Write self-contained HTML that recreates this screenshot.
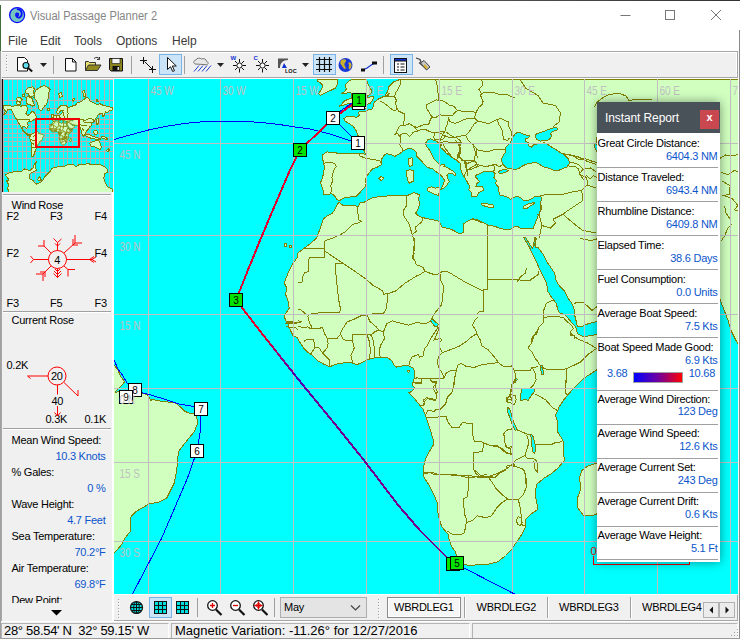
<!DOCTYPE html>
<html><head><meta charset="utf-8"><title>Visual Passage Planner 2</title>
<style>
html,body{margin:0;padding:0}
body{width:740px;height:639px;overflow:hidden;position:relative;background:#f0f0f0;font-family:"Liberation Sans",sans-serif;font-size:11px;color:#000}
.abs{position:absolute}
#title{left:0;top:0;width:740px;height:30px;background:#fff}
#title .t{left:30px;top:9px;font-size:12.5px;color:#858585;line-height:14px;transform:scaleX(.889);transform-origin:0 0;white-space:nowrap}
#menu{left:0;top:30px;width:740px;height:21px;background:#fff}
#menu span{position:absolute;top:3.5px;font-size:12px;color:#3a3a3a;line-height:14px}
#tb{left:0;top:51px;width:738px;height:27px;background:#f0f0f0;border:1px solid #a6a6a6;border-left:none;box-sizing:border-box;box-shadow:inset 0 1px 0 #fff,inset -1px 0 0 #fff}
#left{left:0;top:79px;width:114px;height:542px;background:#f0f0f0}
.lbl{position:absolute;white-space:nowrap;letter-spacing:-.25px;line-height:13px}
.val{position:absolute;white-space:nowrap;color:#0b56cc;text-align:right;letter-spacing:-.25px;line-height:13px}
#rep{left:597px;top:102px;width:123px;height:459.5px;background:#fff;box-shadow:0 0 10px 0 rgba(0,0,0,.42)}
#rep .h{left:0;top:0;width:123px;height:31px;background:#4a5259;color:#fff}
#rep .row{position:absolute;left:0;width:123px;border-top:1px solid #b0b0b0}
#rep .l{position:absolute;left:0.5px;font-size:11px;letter-spacing:-.25px;white-space:nowrap}
#rep .v{position:absolute;right:2.5px;font-size:11px;letter-spacing:-.25px;color:#0b56cc;white-space:nowrap}
#btb{left:114px;top:594px;width:624px;height:27px;background:#f0f0f0;box-sizing:border-box;border-right:1px solid #a6a6a6;border-bottom:1px solid #a6a6a6}
#status{left:0;top:621px;width:740px;height:18px;background:#f0f0f0}
</style></head><body>
<div id="title" class="abs"><div class="abs t">Visual Passage Planner 2</div>
<svg class="abs" style="left:8px;top:6px" width="18" height="18" viewBox="0 0 18 18"><circle cx="9.1" cy="9.1" r="7.5" fill="#74c6be" stroke="#0a0aff" stroke-width="1.3"/><path d="M9.6 9.6a1.2 1.2 0 1 0-1.6-1.5a2.8 2.8 0 0 0 3.8 3.3a4.5 4.5 0 0 0-2.2-8.2" fill="none" stroke="#0a0aff" stroke-width="1.7" stroke-linecap="round"/></svg>
<svg class="abs" style="left:600px;top:0" width="140" height="30" viewBox="0 0 140 30" fill="none" stroke="#777" stroke-width="1"><path d="M20.5 15.5h10"/><rect x="65.5" y="10.5" width="9" height="9"/><path d="M111 10l10 10M121 10l-10 10"/></svg>
</div>
<div class="abs" style="left:0;top:0;width:740px;height:1px;background:linear-gradient(90deg,#b4b4b4,#555 60%,#333)"></div><div class="abs" style="left:0;top:5px;width:1px;height:46px;background:#3f6d3a;z-index:3"></div><div class="abs" style="left:0;top:51px;width:1px;height:588px;background:#a0a0a0;z-index:6"></div><div class="abs" style="left:1px;top:51px;width:1px;height:28px;background:#f4f4f4;z-index:6"></div><div class="abs" style="left:1px;top:79px;width:1px;height:542px;background:#a8a8a8;z-index:6"></div>
<div id="menu" class="abs"><span style="left:8px">File</span><span style="left:40px">Edit</span><span style="left:74px">Tools</span><span style="left:116px">Options</span><span style="left:172px">Help</span></div>
<div id="tb" class="abs"><svg class="abs" style="left:0;top:-1px" width="740" height="27" viewBox="0 51 740 27" shape-rendering="crispEdges">
<rect x="6" y="55" width="1" height="1" fill="#a0a0a0"/><rect x="7" y="56" width="1" height="1" fill="#fff"/>
<rect x="6" y="58" width="1" height="1" fill="#a0a0a0"/><rect x="7" y="59" width="1" height="1" fill="#fff"/>
<rect x="6" y="61" width="1" height="1" fill="#a0a0a0"/><rect x="7" y="62" width="1" height="1" fill="#fff"/>
<rect x="6" y="64" width="1" height="1" fill="#a0a0a0"/><rect x="7" y="65" width="1" height="1" fill="#fff"/>
<rect x="6" y="67" width="1" height="1" fill="#a0a0a0"/><rect x="7" y="68" width="1" height="1" fill="#fff"/>
<rect x="6" y="70" width="1" height="1" fill="#a0a0a0"/><rect x="7" y="71" width="1" height="1" fill="#fff"/>
<rect x="53" y="56" width="1" height="18" fill="#a0a0a0"/>
<rect x="131" y="56" width="1" height="18" fill="#a0a0a0"/>
<rect x="184" y="56" width="1" height="18" fill="#a0a0a0"/>
<rect x="383" y="56" width="1" height="18" fill="#a0a0a0"/>
<rect x="159.5" y="54.5" width="22" height="20" fill="#cce4f7" stroke="#7ab4e6"/>
<rect x="313.5" y="54.5" width="22" height="20" fill="#cce4f7" stroke="#7ab4e6"/>
<rect x="390.5" y="54.5" width="22" height="20" fill="#cce4f7" stroke="#7ab4e6"/>
<path d="M40 63h7l-3.5 4z" fill="#222" shape-rendering="auto"/>
<path d="M217 63h7l-3.5 4z" fill="#222" shape-rendering="auto"/>
<path d="M302 63h7l-3.5 4z" fill="#222" shape-rendering="auto"/>
<g shape-rendering="auto">
<path d="M17.5 57.5h7l3 3v10.5h-10z" fill="#fff" stroke="#111"/><circle cx="26" cy="65.5" r="3" fill="#5fe0f0" stroke="#111" stroke-width="1.2"/><path d="M28.2 68l4 3.6" stroke="#111" stroke-width="2"/>
<path d="M65.5 58.5h7l3.5 3.5v9h-10.5z" fill="#fff" stroke="#111"/><path d="M72.5 58.5v3.5h3.5" fill="none" stroke="#111"/>
<path d="M85.5 70.5v-9h3l1 1h6v2.5" fill="#e8e070" stroke="#333"/><path d="M85.5 70.5l3-5.5h12.5l-3.5 5.5z" fill="#908a20" stroke="#333"/><path d="M94 58.5c2-1.5 4-1.5 5.5 0.5m0-2v2.5h-2.5" fill="none" stroke="#333"/>
<path d="M109.5 58.5h13v12.5h-11.5l-1.5-1.5z" fill="#8a8420" stroke="#111"/><rect x="112" y="58.5" width="8" height="5" fill="#f4f4f4" stroke="#111" stroke-width=".6"/><rect x="112.5" y="66" width="7" height="5" fill="#111"/><rect x="117.5" y="67" width="1.5" height="3" fill="#ddd"/>
<path d="M140 60.5h7M143.5 57v7M144.5 61.5l8 8M149 69.5h7M152.5 66v7" stroke="#111" stroke-width="1" fill="none"/>
<path d="M167.5 57.5v12l3-2.8 2.2 4.8 1.8-.8-2.2-4.700h4z" fill="#fff" stroke="#111"/>
<path d="M195 64c-2-1-1.5-4 1-4 .5-2 4-2.5 5.5-1 2-1 5 0 5 2.5 2 0 2.5 3 0 3.2z" fill="#e8e8e8" stroke="#777"/><path d="M199 65.5l-5 6M203 65.5l-5 6M207 65.5l-5 6M211 65.5l-5 6" stroke="#2244cc" stroke-width="1"/>
<circle cx="239.5" cy="65.5" r="2.6" fill="#fff" stroke="#111"/><path d="M239.5 59v3.5M239.5 69v3.5M233.0 65.5h3.5M242.5 65.5h3.5M235.0 61l2.3 2.3M244.0 61l-2.3 2.3M235.0 70l2.3-2.3M244.0 70l-2.3-2.3" stroke="#111" stroke-width="1"/><text x="230.5" y="60" font-size="6" font-weight="bold" fill="#1030d0" font-family="Liberation Sans, sans-serif">W</text>
<circle cx="262.5" cy="65.5" r="2.6" fill="#fff" stroke="#111"/><path d="M262.5 59v3.5M262.5 69v3.5M256.0 65.5h3.5M265.5 65.5h3.5M258.0 61l2.3 2.3M267.0 61l-2.3 2.3M258.0 70l2.3-2.3M267.0 70l-2.3-2.3" stroke="#111" stroke-width="1"/><text x="253.5" y="60" font-size="6" font-weight="bold" fill="#1030d0" font-family="Liberation Sans, sans-serif">C</text>
<path d="M278 58.5h10v1.5c-5 0-8 3-8 8h-2z" fill="#555"/><path d="M284 63l3 5h-5z" fill="#1030d0"/><text x="285" y="72.5" font-size="5.5" font-weight="bold" fill="#111" font-family="Liberation Sans, sans-serif">LOC</text>
<path d="M316 59.5h16M316 64.5h16M316 69.5h16M319.5 57v15M324.5 57v15M329.5 57v15" stroke="#111" stroke-width="1.2" fill="none"/>
<circle cx="345.5" cy="65" r="7" fill="#1838d8"/><path d="M341.5 60c1.5-1 3.5-1 4.5 0 .5 1.5-1 2.5-1.5 3.5s.5 3 1.5 4.5c-.5 1.5-2 1-3-.5s-1.5-2.5-2.5-3.5c-.5-1.5 0-3 1-4zM348.5 62.5c1.5-.5 3 .5 3 2.5s-.5 3.5-2 4.5c-1-1-1-2.5-.5-3.5s-1-2-.5-3.5z" fill="#c8b030"/>
<path d="M362 70.5l5-2.5 5-3.5 5-2" stroke="#1030d0" stroke-width="1.2" fill="none"/><rect x="361" y="68.5" width="4" height="3" fill="#111"/><rect x="372" y="61.5" width="5" height="3" fill="#111"/>
<rect x="394.5" y="58.5" width="12" height="14" fill="#fff" stroke="#111"/><rect x="394.5" y="58.5" width="12" height="2.5" fill="#1030d0" stroke="#111"/><path d="M397 64h2M400.5 64h4M397 67h2M400.5 67h4M397 70h2M400.5 70h4" stroke="#111" stroke-width="1.2"/>
<path d="M416 58l4 1.5 1.5 4M419 62.5l8 7" stroke="#444" stroke-width="1.3" fill="none"/><path d="M420.5 63l3.5-2.5 6 6.5-3.5 3z" fill="#c8c8c8" stroke="#444"/><path d="M424 65l3 3.2" stroke="#d8b020" stroke-width="2"/>
</g></svg></div>
<div class="abs" style="left:0;top:78px;width:739px;height:1px;background:#fff"></div><div class="abs" style="left:739px;top:30px;width:1px;height:609px;background:#8a8a8a;z-index:5"></div><div class="abs" style="left:738px;top:51px;width:1px;height:588px;background:#fafafa;z-index:5"></div><div class="abs" style="left:0;top:638px;width:740px;height:1px;background:#9a9a9a;z-index:5"></div>
<div id="left" class="abs"><div class="abs" style="left:112px;top:113px;width:2px;height:429px;background:#fff"></div>
<div class="abs" style="left:3px;top:115px;width:108px;height:1px;background:#a0a0a0"></div><div class="abs" style="left:3px;top:116px;width:108px;height:1px;background:#fff"></div>
<div class="abs" style="left:3px;top:232px;width:108px;height:1px;background:#a0a0a0"></div><div class="abs" style="left:3px;top:233px;width:108px;height:1px;background:#fff"></div>
<div class="abs" style="left:3px;top:349px;width:108px;height:1px;background:#a0a0a0"></div><div class="abs" style="left:3px;top:350px;width:108px;height:1px;background:#fff"></div>
<div class="lbl" style="left:11.5px;top:120px;">Wind Rose</div>
<div class="lbl" style="left:6.5px;top:131px;">F2</div>
<div class="lbl" style="left:50px;top:131px;">F3</div>
<div class="lbl" style="left:94.5px;top:131px;">F4</div>
<div class="lbl" style="left:6.5px;top:168px;">F2</div>
<div class="lbl" style="left:94.5px;top:168px;">F4</div>
<div class="lbl" style="left:6.5px;top:217.5px;">F3</div>
<div class="lbl" style="left:50px;top:217.5px;">F5</div>
<div class="lbl" style="left:94.5px;top:217.5px;">F3</div>
<div class="lbl" style="left:11.5px;top:235px;">Current Rose</div>
<div class="lbl" style="left:6.5px;top:280px;">0.2K</div>
<div class="lbl" style="left:51.5px;top:315.5px;">40</div>
<div class="lbl" style="left:45.5px;top:334px;">0.3K</div>
<div class="lbl" style="left:84.5px;top:334px;">0.1K</div>
<div class="lbl" style="left:11.5px;top:355px;">Mean Wind Speed:</div>
<div class="val" style="right:8.5px;top:371px">10.3 Knots</div>
<div class="lbl" style="left:11.5px;top:386.5px;">% Gales:</div>
<div class="val" style="right:8.5px;top:402.5px">0 %</div>
<div class="lbl" style="left:11.5px;top:418.5px;">Wave Height:</div>
<div class="val" style="right:8.5px;top:434.5px">4.7 Feet</div>
<div class="lbl" style="left:11.5px;top:450.5px;">Sea Temperature:</div>
<div class="val" style="right:8.5px;top:466.5px">70.2°F</div>
<div class="lbl" style="left:11.5px;top:482.5px;">Air Temperature:</div>
<div class="val" style="right:8.5px;top:498.5px">69.8°F</div>
<div class="abs" style="left:0;top:513px;width:112px;height:10.5px;overflow:hidden"><div class="lbl" style="left:11.5px;top:1.5px">Dew Point:</div></div>
<svg class="abs" style="left:0;top:0" width="114" height="542" viewBox="0 79 114 542" fill="none" stroke="#ff0000" stroke-width="1" shape-rendering="crispEdges">
<circle cx="57.5" cy="259.5" r="9" shape-rendering="auto"/>
<g shape-rendering="auto">
<path d="M66.5 259.5H93M89.5 259.5l4.5-3M89.5 259.5l4.5 3M92 259.5l4-2.5M92 259.5l4 2.5"/>
<path d="M48.5 259.5H33.5l-3-3.5M33.5 259.5l-3 3.5"/>
<path d="M57.5 250.5V242.5l-4-4M57.5 242.5l4-3.5M57.5 246l-2.5-2.5M57.5 246l2.5-2.5"/>
<path d="M64 253l11-10M75 243v-8M75 243h7M73 245v-6M73 245h5"/>
<path d="M51 253l-7-7M44 246v-6M44 246h-6"/>
<path d="M51 266l-8 8M43 274h-7M43 274v7M45 272h-5M45 272v5"/>
<path d="M57.5 268.5v9M57.5 277.5l-4 -4M57.5 277.5l4-4M57.5 274.5l-3.5-3.5M57.5 274.5l3.5-3.5M57.5 271.5l-2.5-2.5M57.5 271.5l2.5-2.5"/>
<path d="M64 266l4 3.5M68 269.5v7M68 269.5h7"/>
<circle cx="57" cy="376" r="9"/>
<path d="M48 376H27.5l3 2.5M64 382.5l14 13.5v-6M57.5 385v9.5M57.5 406v10l-3-3.5M57.5 416l3-3.5"/>
</g></svg>
<div class="lbl" style="left:54.3px;top:174.5px;font-size:11px">4</div>
<div class="lbl" style="left:51px;top:291px;">20</div>
<svg class="abs" style="left:50px;top:530px" width="14" height="8"><path d="M1 1h11l-5.5 5.5z" fill="#000"/></svg></div>
<div class="abs" style="left:2px;top:79px;width:1px;height:113px;background:#101010"></div>
<div class="abs" style="left:3px;top:79px;width:110px;height:1px;background:#c8c8c8"></div>
<svg class="abs" style="left:3px;top:80px" width="110" height="112" viewBox="3 80 110 112" shape-rendering="crispEdges">
<rect x="3" y="80" width="110" height="112" fill="#00ffff"/>
<g stroke="#b4b4b4" stroke-width="1">
<line x1="3.5" y1="80" x2="3.5" y2="192"/>
<line x1="8.5" y1="80" x2="8.5" y2="192"/>
<line x1="12.5" y1="80" x2="12.5" y2="192"/>
<line x1="17.5" y1="80" x2="17.5" y2="192"/>
<line x1="22.5" y1="80" x2="22.5" y2="192"/>
<line x1="26.5" y1="80" x2="26.5" y2="192"/>
<line x1="31.5" y1="80" x2="31.5" y2="192"/>
<line x1="35.5" y1="80" x2="35.5" y2="192"/>
<line x1="40.5" y1="80" x2="40.5" y2="192"/>
<line x1="45.5" y1="80" x2="45.5" y2="192"/>
<line x1="49.5" y1="80" x2="49.5" y2="192"/>
<line x1="54.5" y1="80" x2="54.5" y2="192"/>
<line x1="58.5" y1="80" x2="58.5" y2="192"/>
<line x1="63.5" y1="80" x2="63.5" y2="192"/>
<line x1="67.5" y1="80" x2="67.5" y2="192"/>
<line x1="72.5" y1="80" x2="72.5" y2="192"/>
<line x1="77.5" y1="80" x2="77.5" y2="192"/>
<line x1="81.5" y1="80" x2="81.5" y2="192"/>
<line x1="86.5" y1="80" x2="86.5" y2="192"/>
<line x1="90.5" y1="80" x2="90.5" y2="192"/>
<line x1="95.5" y1="80" x2="95.5" y2="192"/>
<line x1="99.5" y1="80" x2="99.5" y2="192"/>
<line x1="104.5" y1="80" x2="104.5" y2="192"/>
<line x1="109.5" y1="80" x2="109.5" y2="192"/>
<line x1="113.5" y1="80" x2="113.5" y2="192"/>
<line x1="3" y1="100.5" x2="113" y2="100.5"/>
<line x1="3" y1="108.5" x2="113" y2="108.5"/>
<line x1="3" y1="114.5" x2="113" y2="114.5"/>
<line x1="3" y1="119.5" x2="113" y2="119.5"/>
<line x1="3" y1="124.5" x2="113" y2="124.5"/>
<line x1="3" y1="128.5" x2="113" y2="128.5"/>
<line x1="3" y1="133.5" x2="113" y2="133.5"/>
<line x1="3" y1="137.5" x2="113" y2="137.5"/>
<line x1="3" y1="141.5" x2="113" y2="141.5"/>
<line x1="3" y1="146.5" x2="113" y2="146.5"/>
<line x1="3" y1="151.5" x2="113" y2="151.5"/>
<line x1="3" y1="158.5" x2="113" y2="158.5"/>
<line x1="3" y1="172.5" x2="113" y2="172.5"/>
</g>
<defs><clipPath id="mo"><path clip-rule="evenodd" d="M3 80h110v112h-110zM36 119h43v28h-43z"/></clipPath><clipPath id="mi"><rect x="36" y="119" width="43" height="28"/></clipPath></defs>
<g clip-path="url(#mo)"><g fill="#d0ffc0" stroke="#808000" stroke-width="1" stroke-linejoin="round">
<polygon points="3.9,105.7 10.5,105.2 11.9,107.1 14.2,105.7 18.0,105.2 20.8,106.2 24.5,105.2 26.9,106.2 27.4,109.9 25.9,113.7 27.8,115.6 30.2,113.7 32.0,110.9 34.4,112.7 35.8,115.6 37.2,117.0 35.3,118.8 33.0,120.3 31.1,122.1 28.8,121.2 27.4,123.1 28.3,125.9 26.4,128.7 25.0,126.8 22.2,126.8 23.1,130.1 25.5,132.5 28.3,134.3 31.1,135.3 33.0,133.4 34.4,134.3 33.9,136.7 35.3,138.0 33.0,139.0 30.6,137.3 27.8,135.3 25.0,132.9 22.7,130.6 20.8,126.8 19.4,124.0 18.0,122.1 16.1,118.4 13.7,114.6 11.9,110.9 10.9,109.0 7.6,109.9 5.8,113.7 3.9,114.6 5.3,110.9 3.9,109.0"/>
<polygon points="16.1,98.2 19.4,97.2 22.2,99.1 20.8,101.0 17.5,101.0"/>
<polygon points="16.1,101.9 18.9,101.5 20.8,103.4 19.4,105.2 17.0,104.3"/>
<polygon points="25.9,90.2 28.8,87.4 33.0,86.9 34.4,89.3 33.0,92.1 34.4,94.4 32.0,96.8 29.2,95.8 27.8,93.0 25.9,93.0"/>
<polygon points="25.9,97.2 29.2,96.8 32.0,98.2 33.0,101.5 34.4,105.2 32.0,106.2 29.7,104.3 27.4,104.8 26.4,101.5"/>
<polygon points="22.2,94.4 24.5,94.0 25.0,96.3 23.1,96.8"/>
<polygon points="35.3,90.7 39.6,87.4 44.3,85.5 48.0,87.4 50.4,89.7 48.9,92.1 48.5,96.8 47.1,102.4 46.1,105.2 44.3,106.2 41.4,110.9 39.1,109.0 38.2,105.2 36.3,100.5 33.9,97.2"/>
<polygon points="47.5,108.2 49.2,108.0 49.4,110.1 47.8,110.4"/>
<polygon points="33.0,133.4 35.8,132.0 39.1,132.9 41.4,134.3 43.3,136.7 43.3,138.7 42.4,142.0 40.0,143.9 38.2,144.8 36.3,148.1 34.9,151.8 33.5,156.1 32.0,156.5 31.6,152.8 32.0,148.1 31.6,143.4 30.2,139.6 29.2,136.8 29.7,134.0 30.2,136.2 31.1,134.3"/>
<polygon points="56.3,112.7 58.2,108.0 61.0,105.7 64.3,105.2 67.1,106.2 68.1,108.0 71.8,106.2 75.6,105.2 77.0,102.9 80.3,101.9 83.1,100.1 85.9,97.7 88.7,98.2 90.2,101.0 93.4,102.9 96.7,104.3 100.0,103.8 103.8,105.7 107.5,106.2 110.3,107.1 112.7,108.0 112.2,109.9 109.4,110.4 108.0,112.3 105.2,111.8 104.7,114.6 102.8,117.0 102.4,113.7 100.0,113.7 97.7,115.1 96.7,117.4 95.3,119.3 93.9,121.7 91.6,123.1 91.1,125.9 89.7,126.8 88.3,129.6 86.4,130.6 85.0,134.3 83.6,136.2 82.2,134.3 81.2,130.6 80.3,127.8 78.9,128.7 77.5,132.0 76.1,134.3 74.7,130.6 72.8,127.8 70.0,128.7 68.1,130.6 65.3,128.7 61.5,126.8 57.8,124.9 54.0,124.9 51.2,122.1 52.1,118.4 54.0,115.6 56.8,115.6 59.6,115.6 61.5,113.7 63.4,110.4 60.6,110.9 58.2,113.7"/>
<polygon points="50.2,123.1 54.0,122.1 57.8,123.5 61.5,124.9 65.3,127.8 68.1,130.6 70.0,134.3 69.5,134.9 68.1,137.8 66.2,141.0 64.8,143.4 62.5,144.8 60.1,144.3 58.7,140.6 58.2,136.8 56.8,134.0 55.9,136.2 52.1,135.7 49.3,133.4 48.4,128.7 49.3,124.9"/>
<polygon points="51.2,115.1 53.1,114.2 53.5,117.4 51.7,118.4"/>
<polygon points="58.7,93.5 61.5,92.6 62.3,96.3 59.6,97.9"/>
<polygon points="82.6,91.1 84.5,90.7 85.7,96.3 83.9,96.8"/>
<polygon points="96.3,99.6 97.9,99.4 98.1,101.9 96.7,101.9"/>
<polygon points="72.3,99.1 74.2,98.7 73.9,101.0 72.6,101.0"/>
<polygon points="96.7,119.3 98.1,118.4 98.9,121.7 97.4,124.9 96.3,123.5"/>
<polygon points="68.6,140.8 70.2,140.2 70.5,142.9 69.2,144.5 68.3,142.9"/>
<polygon points="85.0,134.0 88.7,134.5 92.5,136.3 96.3,137.3 100.9,139.2 98.1,139.6 93.4,138.7 89.7,137.8 86.4,136.3"/>
<polygon points="93.4,131.2 96.3,130.2 98.1,133.1 96.3,134.9 94.4,134.0"/>
<polygon points="100.9,135.9 104.7,136.8 108.0,139.2 105.2,139.2 101.9,137.8"/>
<polygon points="89.7,143.4 92.5,141.5 96.3,140.6 99.1,141.0 100.5,144.3 101.4,147.1 100.0,149.5 97.2,148.1 94.4,146.7 91.1,146.2"/>
<polygon points="106.6,150.4 108.5,148.8 109.4,150.0 108.0,151.8"/>
<polygon points="5.3,175.3 7.6,173.4 11.4,172.5 15.1,171.6 20.8,172.0 24.1,168.7 25.5,169.7 30.2,170.2 33.0,167.8 34.4,164.0 36.3,161.7 35.3,165.9 36.3,170.2 33.9,171.6 30.2,173.4 29.2,176.3 30.2,179.1 33.0,180.5 34.9,182.8 36.7,184.2 39.6,182.8 42.4,180.9 44.3,177.2 47.1,174.4 49.9,171.6 51.8,168.7 54.6,167.3 58.3,166.9 58.7,166.9 63.4,166.9 68.1,164.5 72.8,164.0 76.1,166.9 78.4,165.0 83.1,164.5 87.8,163.6 91.6,164.5 96.3,164.0 100.9,165.0 104.7,166.9 107.5,169.7 107.1,172.5 104.7,173.4 103.8,178.1 105.2,182.8 107.5,186.6 112.7,189.4 112.7,192.7 9.5,192.7 7.6,188.5 8.6,184.7 6.7,180.9 9.0,180.0 7.2,177.2"/>
<polygon points="39.6,176.3 41.4,180.5 37.7,180.0"/>
</g>
<g fill="none" stroke="#808000" stroke-width="1">
<polyline points="11.9,110.9 16.1,119.3 29.2,119.8 31.1,122.1"/>
<polyline points="22.2,126.8 25.0,126.8"/>
<polyline points="10.9,109.0 11.9,110.9"/>
<polyline points="54.0,118.4 57.8,119.3 61.5,118.4 65.3,120.3 69.0,119.3"/>
<polyline points="55.9,115.6 56.8,120.3 55.9,124.0"/>
<polyline points="59.6,115.6 60.6,120.3 59.6,124.9"/>
<polyline points="63.4,111.8 64.3,117.4 63.4,122.1 65.3,124.9"/>
<polyline points="67.1,108.0 68.1,113.7 67.1,119.3"/>
<polyline points="57.8,121.2 61.5,122.1 64.3,124.0"/>
<polyline points="68.1,121.2 71.8,122.1 75.6,121.2 78.9,122.1"/>
<polyline points="70.9,117.4 72.8,122.1 71.8,126.8"/>
<polyline points="66.2,124.9 70.0,125.9 72.8,127.8"/>
<polyline points="74.7,119.3 76.5,124.9 75.6,128.7"/>
<polyline points="79.8,119.3 85.0,120.3 89.7,118.4 93.4,119.3 94.4,122.1"/>
<polyline points="83.1,121.2 85.9,123.1 89.7,122.1 91.6,123.1"/>
<polyline points="80.3,124.9 84.0,125.9 86.9,124.9"/>
<polyline points="82.2,128.7 84.0,130.6"/>
<polyline points="54.9,120.3 54.0,123.1"/>
<polyline points="58.7,123.1 57.8,124.9"/>
<polyline points="62.0,119.3 62.5,122.1"/>
<polyline points="50.2,126.8 54.0,127.8 57.8,126.8 61.5,128.7"/>
<polyline points="53.1,123.1 53.5,127.8 54.9,132.5 55.9,136.2"/>
<polyline points="56.8,124.0 57.3,128.7 59.6,132.5 58.7,136.2"/>
<polyline points="60.6,124.9 61.5,130.6 64.3,133.4"/>
<polyline points="49.3,130.6 53.1,131.5 57.8,132.0 62.5,134.3 67.1,133.4"/>
<polyline points="64.3,127.8 65.3,133.4"/>
<polyline points="51.2,134.3 54.9,135.3 59.6,136.2"/>
<polyline points="58.7,134.9 63.4,135.9 68.1,136.8"/>
<polyline points="60.6,134.0 61.5,138.7 64.3,140.6"/>
<polyline points="64.3,134.9 65.3,139.6"/>
<polyline points="59.6,139.6 63.4,140.6 66.2,141.0"/>
<polyline points="62.5,137.8 62.9,143.4"/>
<polyline points="30.2,139.6 33.9,140.6 37.7,139.6"/>
<polyline points="32.0,148.1 34.9,147.1"/>
<polyline points="31.6,143.4 34.4,144.3"/>
<polyline points="33.0,136.2 36.7,135.3 39.6,136.7"/>
</g></g>
<g clip-path="url(#mi)"><g transform="translate(30.50,108.40) scale(0.0679,0.0644)" stroke="#808000" stroke-width="13" stroke-linejoin="round" shape-rendering="auto"><use href="#ld" fill="#d0ffc0"/><use href="#se" fill="#00ffff"/><use href="#bl" fill="none"/></g></g>
<rect x="36" y="119" width="43" height="28" fill="none" stroke="#f00000" stroke-width="2"/>
</svg>
<svg id="map" width="625" height="515" viewBox="114 79 625 515" style="position:absolute;left:114px;top:79px" shape-rendering="crispEdges">
<rect x="114" y="79" width="626" height="515" fill="#00ffff"/>
<g fill="#d0ffc0" stroke="#808000" stroke-width="1" stroke-linejoin="round"><g id="ld">
<polygon points="400,79.5 741,79.5 741,350 739,346 735.6,339.7 731.2,331 727.9,320 723.6,309 719.6,298 718,283 708,285 700,275 692,265 665,263 645,258 640,262 657,277 635,300 610,316 597,321.4 597,334.1 615.5,331 608,352 596,370.5 584.25,378 578,384.25 570.5,391.75 564.25,399.25 559.25,406.75 555.5,415.5 558,423 557.5,431.75 563,440.5 563.5,450.5 564.25,460.5 558,468 550.5,474.25 544.25,478 536.75,484.25 535.5,490.5 535,493 536.75,503 538,509.25 530.5,514.25 526,519.25 525.5,526.75 521.75,534.25 516.75,541.75 511.75,549.25 505.5,555.5 498,561.75 488,564.25 478,564.25 470.5,566 464.25,564.25 456.75,556.75 455.5,551.75 451.75,546.75 449.25,540.5 448,534.25 441.75,526.75 439.25,519.25 437.5,510.5 438,504.25 434.25,495.5 429.25,485.5 424.25,478 423,474.25 423.75,465.5 425.5,459.25 429.25,451.75 433,445.5 433,439.25 430.5,430.5 428,423 425.5,415.5 423,409.25 418,403 413,396.75 408.75,392.83 412.01,391.21 414.94,387.95 412.01,384.69 414.45,378.18 414.94,373.29 413.64,368.4 408.75,365.96 402.23,365.96 396.53,367.1 394.09,365.15 391.65,360.26 387.58,357.82 381.06,357 374.55,357.82 368.03,359.45 363.15,361.89 356.63,364.82 351.75,362.7 345.23,362.7 335.46,364.33 329.76,366.78 324.06,364.33 318.36,361.07 313.47,356.19 307.77,352.12 303.7,348.05 300.44,343.16 298,339.09 297.75,338 293,335.5 290.5,330.5 288,324.25 285.5,320.5 284.25,315.5 289.25,308 288,300.5 285.5,294.25 286.75,288 284.25,283 288,273 291.75,265.5 297.75,256.75 298,253 308,245.5 316.75,238 323.12,219.88 324.38,218.12 327.5,215.62 332.5,213.12 335,209.38 336.88,205 338.75,202.5 339.5,202.38 341.25,204.38 343.75,205.62 348.75,205 353.75,205.62 358.12,206.25 360,203.12 365,201.88 366.88,200.62 371.25,198.12 377.5,196.88 385,196.25 390,195.62 395.62,195.62 401.25,195 406.88,195.62 410,194.38 413.75,192.5 416.88,193.75 420,195 418.12,198.75 420,203.75 418.12,208.75 415.62,213.12 418.12,215.62 422.5,217.5 427.5,218.75 433.75,220 438.75,221.25 440.62,223.75 441.88,226.88 446.25,228.12 451.25,229.38 455,231.25 459.38,233.75 463.12,232.5 463.75,228.75 463.75,223.75 466.25,221.88 470,220 475,219.38 478.75,220.62 481.88,222.5 472,218.75 477,219.38 479.5,221.25 484.5,223.12 488.25,225 494.5,226.25 499.5,228.12 504.5,229.38 508.25,230 512,228.75 515.12,226.25 518.25,226.88 521.38,228.75 524.5,228.12 530.12,228.75 533.25,228.12 535.12,223.75 537,218.75 539.5,212.5 540.75,208.75 540.5,203.75 541.38,198.75 540.75,196.25 538.25,196.25 534.5,196.88 530.75,199.38 527,200.62 523.25,200 520.75,197.5 517,196.25 513.88,197.5 510.75,199.38 508.25,197.5 504.5,196.25 500.12,195 498.88,191.25 498.25,186.88 495.75,183.75 496.38,180.62 493.88,177.5 495.12,173.75 493.25,171.88 488.25,171 483.25,171.88 479.5,173.75 476.38,175 475.12,176.25 477.62,179.38 479.5,181.88 476.38,183.75 475.75,186.88 478.88,186.88 482.62,186.88 483.88,190.62 480.75,191.25 478.25,193.12 477.62,195.62 475.75,196.88 471.88,196.25 471.25,192.5 468.75,190 470,186.88 468.12,183.75 466.25,180 463.75,176.25 461.25,171.25 460.62,167.5 460,163.12 456.25,160 451.25,156.88 446.25,153.12 442.5,148.75 440,147.5 441.25,145 440,143.12 438.12,142.5 436.88,141.25 433.75,140.62 430.62,138.75 427.5,140 425.62,143.12 426.25,146.25 430,150.62 431.88,154.38 434.38,159.38 438.12,163.12 440,165.62 442.5,164.38 445,164.38 443.75,166.25 446.88,167.5 450,169.38 453.75,171.25 455.62,174.38 455,176.25 452.5,173.12 448.75,173.12 446.88,175.62 447.5,178.12 449.38,181.25 446.88,185 443.75,188.12 440.62,190 441.88,187.5 443.75,183.75 444.38,180 442.5,176.88 439.38,173.75 436.25,171.88 432.5,168.75 427.5,167.5 424.38,164.38 420.62,160 416.88,156.25 416.25,152.5 413.75,149.38 408.75,148.12 403.75,150.62 399.38,153.75 395,156.25 390,154.38 386.25,153.75 383.75,155.62 381.88,158.75 381.5,164.5 377.5,167 372.5,168.88 369.38,172.62 366.25,177 365,180.12 366.25,183.88 365,187 361.88,190.12 358.75,193.88 356.25,196.38 350,197 345,197.62 341.25,199.5 339.5,200.88 339.38,200.62 336.88,199.38 334.38,195.62 330.62,193.12 328.75,195 323.75,194.38 323.12,190 321.88,186.25 320.62,182.5 322.5,177.5 323.75,172.5 324.38,167.5 323.75,163.12 322.5,158.75 322.5,155 326.88,151.88 331.88,152.5 337.5,153.12 343.75,153.75 351.25,153.12 358.75,153.12 365.5,154.25 363,148 358,135.5 356.12,130.5 353,126.12 349.25,123.62 344.88,121.12 343.62,118.62 346.75,116.75 351.75,116.12 356.75,117.38 359.25,115.5 358.62,112.38 360.5,111.12 363.62,111.75 365.5,111.12 368,109.88 371.75,109.25 373,107.38 374.25,102.38 378,99.25 383,96.75 388,95.5 389.88,93 385,96.12 387.5,91.75 388.75,86.75 393.75,81.75 400,79.5"/>
<polygon points="318,79.5 338,79.5 337.38,84.25 335.5,88 330.5,90.5 324.88,93 320.5,95.5 318.62,93.62 321.12,89.88 323,85.5 320.5,83 317.38,81.12"/>
<polygon points="351.75,79.5 348,81.75 345.5,84.25 346.12,89.25 344.25,91.75 341.12,93.62 346.75,93 350.5,92.38 351.75,94.25 351.75,98 348,99.25 344.25,101.12 341.12,104.88 339.25,106.12 344.25,104.88 348,103.62 351.12,104.25 351.75,107.38 358,108 364.25,108 366.75,108 366.12,104.88 370.5,103 373,99.25 373.62,96.75 370.5,96.75 368,98 366.12,96.75 370.5,94.25 371.75,90.5 369.25,86.75 367.38,83 366.5,79.5"/>
<polygon points="408.75,158.75 411.88,157.5 412.75,160.62 412.25,165.62 410,166.5 408.5,163.75"/>
<polygon points="406.88,170.62 410,169.75 413.12,170.62 413.75,176.25 413.12,181.25 409.38,183.12 407.5,180.62 406.88,175.62"/>
<polygon points="427.5,188.12 431.25,186.88 435.62,188.12 439.38,187.5 440,189.38 438.75,193.75 438.12,195.62 433.75,193.75 430,191.88 427.5,190.62"/>
<polygon points="378.75,178.75 381.5,176.25 383.5,178.12 381.5,180.62"/>
<polygon points="481.38,203.5 484.5,203.12 489.5,204.38 493.88,205.25 493.88,207.25 489.5,207.5 485.12,206.25 481.75,205"/>
<polygon points="523.25,206.25 527,204.38 531.38,203.12 534.5,202.25 533.88,203.75 530.75,205.62 528.25,207.5 525.75,209 523.5,208.12"/>
<polygon points="284,244 286.5,243.5 287,246 284.5,246.5"/>
<polygon points="289,245.5 291,245.25 291.25,247.25 289.25,247.5"/>
<polygon points="60,553 60,340 113,365.3 114.23,365.27 117.95,369.73 120.18,375.68 124.64,381.92 122.41,384.6 119.43,387.57 114.97,391.73 114.97,392.33 120.92,391.29 127.61,390.54 141.73,393.52 146.93,394.26 149.16,397.23 150.95,400.95 152.14,399.46 156.6,400.21 162.54,401.69 169.98,402.14 175.92,403.18 180.38,406.89 184.84,411.35 189.3,413.14 194.21,413.58 196.73,417.3 197.92,423.25 196.75,425.5 194.25,431.75 188,439.25 183,445.5 178.5,451.75 177.5,460.5 176.75,470.5 174.25,483 171.75,488 166.75,498 158,502.5 149.25,503.75 143,507.5 135.5,511.75 130,518 131,525.5 130,531.75 124.25,539.25 121.75,544.25 115.5,551.75 113,553 100,580 60,600"/>
<polygon points="596.75,463 588,466 581.75,470.5 579.25,478 581,488 577.5,498 578,508 583,515 590.5,516 596.75,514.25 600.5,503 600.5,478"/>
<polygon points="407.25,370.75 409,370 410,371.25 408.5,372.5"/>
</g></g>
<g fill="#00ffff" stroke="#808000" stroke-width="1" stroke-linejoin="round"><g id="se">
<polygon points="511.38,138.75 514.5,135 515.75,133.12 520.12,132.5 523.88,134.38 529.5,136 528.88,137.75 525.12,139 525.12,141.25 528.88,142.75 528.25,145.62 531.38,147.25 533.88,144.75 538.25,143.75 544.5,142.75 547,143.5 550.12,146.25 554.5,148.75 558.25,151.25 561.38,153.12 563.88,154.38 568.88,159.38 569.25,163.75 567,166.88 563.88,168.12 559.5,170 553.25,170 548.25,168.12 543.25,166.88 539.5,164.38 535.75,162.5 530.75,163.12 525.75,164.38 522,166.25 518.25,168.75 514.5,169.38 509.5,168.75 507,168.12 504.5,166.25 502.62,163.75 501.38,160 502.62,156.25 505.12,152.5 505.75,147.5 508.25,144.38 510.75,143.12"/>
<polygon points="535.75,134.38 540.12,132.5 545.75,130.62 550.75,128.75 554.5,127.5 557.62,128.12 557,130 553.25,131.25 550.75,133.12 551.38,136.25 549.5,139.38 547,140.62 543.25,140 540.12,141.25 537,139.38 535.5,136.88"/>
<polygon points="498.88,171.25 502,170 506.38,169.75 508.25,170.62 505.12,172.5 500.75,173.75 498.88,173.12"/>
<polygon points="523.62,237.19 526.87,242.89 530.13,248.59 532.57,254.29 536.64,262.43 539.9,269.76 543.16,276.27 546.42,282.79 548.05,291.75 552.12,298.26 556.19,303.15 557.82,309.66 559.45,312.92 564.33,314.55 568.4,318.62 572.48,323.5 575.73,326.76 576.55,330.83 578.18,334.09 583.06,336.53 591.21,335.72 597.23,334.09 614.01,334.09 614.01,321.39 597.23,321.39 588.76,323.5 583.06,325.95 577.36,326.76 576.55,322.69 574.92,316.18 574.1,308.85 571.66,303.15 567.59,297.45 564.33,290.93 560.26,286.86 556.19,281.16 554.56,273.02 551.3,268.13 547.23,262.43 543.16,254.29 538.27,247.77 535.02,246.96 535.18,237.19 534.2,237.19 533.88,246.14 532.25,248.1 528.5,242.56 525.73,237.19"/>
<polygon points="540,365.5 542.5,365.5 543.5,374.25 541.75,375"/>
<polygon points="513.75,381.75 516,378 517.25,379.25 515,383"/>
<polygon points="430.7,320.25 432.66,319.43 438.36,324.32 437.22,327.25 434.29,325.95 431.84,322.69"/>
<polygon points="521.76,388.96 534.79,388.96 533.97,392.21 530.72,396.29 528.27,400.36 525.02,399.54 520.94,400.36 520.94,393.84"/>
<polygon points="507.92,407.69 509.54,408.5 511.99,416.64 514.43,423.97 516.87,428.86 515.24,430.49 512.8,425.6 510.36,419.09 507.92,412.57"/>
<polygon points="530.72,434.56 532.67,435.37 534.79,442.7 535.6,448.4 534.79,453.29 533.16,452.48 532.02,446.78 531.53,441.07"/>
<polygon points="594.19,143.96 597.45,142.82 597.45,152.1 595,148.36"/>
<polygon points="645,258 635,262 618,268 610,262 607,250 600,240 605,238 615,247 628,252 640,254"/>
<polygon points="600,130 612,127 622,135 617,150 622,165 628,180 622,195 608,194 603,180 606,165 598,150 596,140"/>
</g></g>
<g fill="none" stroke="#808000" stroke-width="1"><g id="bl">
<polyline points="303.7,248.59 324.06,248.59"/>
<polyline points="333.02,238 328.13,239.63 324.87,241.26 324.87,248.59 324.38,257.22 309.07,257.54 308.59,271.39 304.51,273.02 302.89,276.27 302.89,281.97 298,282.3"/>
<polyline points="324.87,251.03 335.46,258.36 343.6,263.73 355,271.39 365.59,278.72 372.92,285.23 382.69,290.93 383.5,294.19 387.58,293.7"/>
<polyline points="343.6,263.73 335.13,263.73 336.27,278.72 338.72,299.89 340.67,309.66"/>
<polyline points="387.58,293.7 395.72,290.93 405.49,282.79 418.03,275.13"/>
<polyline points="414.45,238 414.94,247.77 412.82,255.92 416.08,264.06 418.03,265.69"/>
<polyline points="387.58,293.7 387.9,303.15"/>
<polyline points="338.72,300 340.67,309.77 339.53,312.21 322.43,312.7 313.47,313.36 309.4,314.66"/>
<polyline points="298,308.96 301.26,310.1 305.33,313.84 309.4,314.66 307.77,316.29 309.4,322.8 311.84,326.87 311.03,328.99"/>
<polyline points="298,320.85 302.07,321.66 298,322.8"/>
<polyline points="298,326.06 302.89,327.69 307.77,326.87 311.03,328.99"/>
<polyline points="311.03,328.99 317.54,328.5 322.43,327.69 324.87,334.2 327.32,338.27 337.09,338.27 340.67,334.2 341.16,330.94"/>
<polyline points="341.16,330.94 344.42,326.06 346.86,321.99 353.37,319.54 361.52,315.47 367.22,314.98"/>
<polyline points="367.22,314.98 369.66,321.17 376.18,326.87 378.62,330.13 372.92,333.39 370.48,335.02"/>
<polyline points="340.67,334.2 343.6,339.9 352.56,340.72 352.56,334.53 366.4,334.2 370.48,335.02 374.55,331.76 378.62,330.13"/>
<polyline points="352.56,340.72 354.19,348.05 350.93,355.37 352.56,362.7"/>
<polyline points="367.22,335.02 369.66,342.35 370.48,352.12 368.85,359.45"/>
<polyline points="371.29,335.02 373.73,342.35 374.55,352.12 374.22,357.82"/>
<polyline points="378.62,330.13 383.5,331.76 384.32,339.09 380.25,345.6 379.43,352.12 380.25,357"/>
<polyline points="383.5,331.76 386.76,323.62 392.46,320.85 398.98,322.8 408.75,325.24 418.03,321.99"/>
<polyline points="387.58,300 385.95,309.77 383.5,313.03 372.92,313.84 367.22,314.98"/>
<polyline points="303.7,341.53 306.14,339.9 313.47,339.9 315.1,347.23 319.17,348.05 322.43,352.93 325.69,349.67 327.32,347.23 328.13,343.97 327.32,338.27"/>
<polyline points="315.1,347.23 311.03,353.75"/>
<polyline points="322.43,352.93 326.5,357 329.76,360.26 329.76,366.78"/>
<polyline points="418.03,354.56 412.01,357 409.56,361.89 408.75,365.96"/>
<polyline points="414.94,378.18 418.03,377.85"/>
<polyline points="414.94,383.88 418.03,383.39"/>
<polyline points="418,265.36 422.89,267.32 424.84,271.06"/>
<polyline points="418,275.79 424.84,271.39 434.29,274.64 439.17,273.83 442.43,271.39 447.32,271.39 463.6,281.16 483.15,290.93 483.15,289.3 487.71,289.3 487.71,238"/>
<polyline points="487.71,279.53 517.35,279.53 523.86,280.67 530.38,280.35 538.03,274.64"/>
<polyline points="517.35,281.65 520.61,276.76 525.49,273.02 526.31,268.13"/>
<polyline points="483.15,289.3 483.47,311.29 478.26,312.1 477.45,314.22"/>
<polyline points="439.99,273.83 440.8,280.35 443.73,286.86 442.43,298.26 441.62,304.78 438.36,308.85 433.47,314.55 431.36,320.25"/>
<polyline points="418,322.69 424.51,323.99 431.03,321.06"/>
<polyline points="438.36,326.87 435.1,331.76 431.84,336.64 427.77,344.79 424.51,348.86 422.89,356.19 419.63,357 418,354.56"/>
<polyline points="438.36,326.87 438.36,330.13 435.1,338.27 434.29,339.9 440.8,338.27 441.62,340.72 439.17,341.53 439.99,348.05 442.43,352.44"/>
<polyline points="442.43,352.44 450.57,349.67 458.72,346.42 465.23,342.35 471.75,336.64 475.82,334.2 477.45,335.02"/>
<polyline points="477.45,317.26 474.19,321.17 472.56,325.24 475.82,330.13 477.45,335.02"/>
<polyline points="477.45,335.02 480.7,340.72 481.52,345.6 488.03,349.67 493.73,356.19 498.62,362.7 502.69,365.96 509.21,366.78 511.65,365.96 514.09,370.03"/>
<polyline points="442.43,352.44 438.36,357 437.22,362.7 439.17,368.4 442.43,373.29 444.06,378.18 446.5,372.48 450.57,370.85 456.27,370.85 457.9,365.15 461.16,363.52 465.23,365.96 474.19,367.59 479.89,365.15 489.66,363.52 498.62,362.7"/>
<polyline points="418,378.18 421.26,378.18 421.26,383.06 418,383.39"/>
<polyline points="421.26,378.18 430.21,378.18 431.03,381.43 435.1,381.43 435.92,384.69 433.47,386.32 434.29,391.21 436.73,394.46 435.92,399.35 427.77,398.53 424.51,401.79 423.7,404.07"/>
<polyline points="430.21,378.18 444.06,378.18"/>
<polyline points="456.27,370.85 454.64,378.18 453.02,388.76 451.39,393.65 447.32,397.72 445.69,404.07"/>
<polyline points="514.09,370.03 522.23,370.85 530.38,370.03 532.01,367.59 538.03,366.78"/>
<polyline points="514.09,370.03 515.72,375.73 514.91,381.43 511.65,384.69 510.83,392.83 509.21,396.09 511.65,397.72 512.46,404.07"/>
<polyline points="532.01,367.59 535.26,373.29 536.08,379.8 533.64,384.69 530.38,387.95"/>
<polyline points="538.03,329.32 534.45,335.02 532.01,342.35 527.93,348.05 532.01,352.12 535.26,358.63 538.03,361.89"/>
<polyline points="509.21,396.09 506.76,397.72 507.25,400.16 510.83,399.35"/>
<polyline points="530.13,280.02 538.27,274.16 539.09,270.57"/>
<polyline points="552.93,299.89 546.42,303.15 543.97,309.66 543.65,317.8"/>
<polyline points="543.65,317.8 548.86,316.5 557,316.18 563.52,317.8 568.4,322.69 572.48,326.76 573.29,329.21"/>
<polyline points="573.29,329.21 570.03,331.65 570.03,334.91 574.1,335.72 574.92,338.98"/>
<polyline points="543.65,317.8 543.16,322.69 539.09,326.76 536.64,334.09 532.57,336.53 530.94,342.07"/>
<polyline points="574.1,303.96 576.55,302.33 583.06,302.33 587.95,306.4 592.02,310.48 597.23,306.4"/>
<polyline points="534.2,246.14 536.64,238"/>
<polyline points="579.8,238 584.69,239.63 591.21,240.44 597.23,238.81"/>
<polyline points="412.66,382.93 421.62,382.93 421.62,380"/>
<polyline points="430.57,380 433.02,382.44 436.27,381.63 435.46,388.14 437.09,391.4 436.76,396.29 435.46,400.36 429.76,399.54 427.32,397.1 423.24,400.36 424.87,404.43 420.8,406.06"/>
<polyline points="455,380 452.56,391.4 447.67,396.29 445.23,404.43 439.53,410.13 436.27,409.32 433.83,411.76 430.57,410.13 427.32,410.94 425.69,415.02"/>
<polyline points="426.5,417.13 435.46,417.13 446.05,416.64 447.67,421.53 451.75,427.23 459.07,427.56 462.33,422.67 472.1,423.65 472.92,435.37 474.55,441.89 481.88,441.89 483.5,442.7"/>
<polyline points="483.5,442.7 482.69,451.66 473.73,452.48 473.24,468.76 476.18,473.65 479.43,476.09"/>
<polyline points="483.5,442.7 489.21,445.15 497.35,446.78 502.23,448.4 506.31,452.48 510.38,454.1 511.19,446.78 507.12,447.59 504.68,441.89 503.86,433.75 506.31,430.49 512.01,428.86"/>
<polyline points="424.06,473.65 430.57,472.51 433.02,474.14 455,474.46 468.03,477.72 476.18,476.91 479.43,476.09 486.76,474.46"/>
<polyline points="479.43,476.09 489.21,477.72 495.72,476.91 501.42,471.21 506.31,468.76 512.01,464.69 515.26,464.69"/>
<polyline points="512.01,388.14 510.38,394.66 507.12,399.54 507.12,402.8"/>
<polyline points="534.79,393.84 545.37,399.54 552.7,407.69 556.78,410.13"/>
<polyline points="565.73,380 565.73,393.03 568.18,395.47"/>
<polyline points="511.99,388.96 520.94,388.96"/>
<polyline points="510.36,388.96 511.17,394.66 507.1,397.92 506.29,401.17 510.36,402.8 514.43,404.43 516.06,399.54 515.24,395.47 511.99,394.66"/>
<polyline points="534.79,445.15 543.75,444.33 551.89,444.33 555.15,442.7 562.48,441.56"/>
<polyline points="516.87,429.67 524.2,432.93 530.72,435.37"/>
<polyline points="490,445.96 497.33,445.15 500.59,448.4 506.29,453.29 511.17,454.1 510.36,448.4 506.29,447.59 504.66,441.89 503.84,433.75 507.1,429.67 512.8,428.86"/>
<polyline points="526.64,435.37 529.09,441.89 526.64,450.03 525.02,455.73 528.27,458.99 531.53,458.18 535.6,459.8 538.05,463.88 537.23,472.02 534.79,468.76 533.97,461.43"/>
<polyline points="525.02,455.73 516.06,459.8 512.8,463.06 514.43,466.32 507.1,465.5 505.47,470.39 501.4,472.02 494.89,477.72 490,476.09"/>
<polyline points="514.43,466.32 522.57,468.76 525.02,472.83 525.02,484.07"/>
<polyline points="422.86,472.86 431.46,472.29 439.1,474.77 467.75,475.35 481.12,477.64 487.8,476.68"/>
<polyline points="468.7,475.35 467.75,496.74 463.54,498.65 464.31,513.93 466.79,519.66 465.84,525.39 464.31,533.03"/>
<polyline points="447.69,531.12 451.51,533.98 461.06,534.55 464.31,533.03"/>
<polyline points="466.79,522.52 472.52,520.61 477.3,515.84 485.89,517.75 491.62,515.84 496.39,508.2 502.12,502.47 507.85,499.03"/>
<polyline points="487.8,476.68 491.62,481.46 496.39,489.1 502.12,494.83 507.85,499.03"/>
<polyline points="507.85,499.03 518.36,499.6 523.13,494.83 526,488.14 526,477.64 524.09,470"/>
<polyline points="518.36,499.6 520.27,508.2 521.22,515.84 522.18,525.39 525.04,525.39"/>
<polyline points="516.45,519.66 518.36,516.79 521.22,517.75 522.18,522.52 520.27,525.77 517.4,524.43 516.45,519.66"/>
<polyline points="474.43,470 481.12,475.73 487.8,476.68 496.39,473.82 504.03,470"/>
<polyline points="324.38,163.12 328.75,162.5 334.38,163.12 336.25,166.25 334.38,169.38 333.12,172.5 331.88,177.5 332.5,181.25 330.62,186.25 331.88,189.38 330.62,193.12"/>
<polyline points="359.38,153.12 359.38,155.62 365,158.12 372.5,159.38 380,160.62 381.5,164.38"/>
<polyline points="358.12,206.25 357.5,210 358.12,215 358.75,219.88"/>
<polyline points="400,79.25 400.62,83 398.75,88 395.62,93 394.38,96.75 396.25,99.88 395.62,104.25 396.88,107.38 398.75,111.12 405,114.25 404.38,119.25 403.12,125.5"/>
<polyline points="385,96.12 389.38,96.75 393.75,96.75 395.62,98"/>
<polyline points="380,101.12 383.75,103 388.12,106.12 392.5,109.88 395.62,110.5 396.88,108"/>
<polyline points="403.12,125.5 399.38,126.12 397.5,130.5 395,134.25 397.5,133.62 400,136.75 400.62,134.88 404.38,133 406.88,133.62 409.38,136.75 411.25,134.88 413.12,132.38 417.5,131.12 415.62,128 413.12,126.12 409.38,123.62 405,125.5 403.12,125.5"/>
<polyline points="400,136.75 400.62,141.75 399.38,144.25 401.88,148 403.12,151.12"/>
<polyline points="413.12,126.12 417.5,127.38 423.12,124.88 428.75,124.25 430,120.5 431.88,116.75"/>
<polyline points="431.88,116.75 429.38,113 426.88,108.62 426.25,104.88 431.25,102.38 436.25,99.88 438.75,100.5"/>
<polyline points="435.62,79.25 436.88,84.25 437.75,90.5 438.5,96.75 438.75,100.5"/>
<polyline points="431.88,116.75 435,118 440,114.88"/>
<polyline points="417.5,131.12 421.25,129.25 425,129.25 430,131.75 435,133 438.75,132.38"/>
<polyline points="438.75,132.38 442.5,134.25 445,136.75 442.5,139.25 438.75,139.88 433.75,139.25"/>
<polyline points="435,133 433.75,136.75 434.38,139.88"/>
<polyline points="476.75,164.25 485.5,166.75 495.5,164.25 499.25,166.75 503,164.25"/>
<polyline points="473,144.25 475.5,153 474.25,160.5 476.75,164.25"/>
<polyline points="466.75,170.5 470.5,168 476.75,164.25"/>
<polyline points="464.25,160.5 465.5,165.5 466.75,170.5 468,175.5"/>
<polyline points="455.5,140.5 460.5,148 458,155.5 463,160.5 464.25,160.5 474.25,160.5"/>
<polyline points="520.5,80 525.5,88 538,95.5 543,103 555.5,105.5 560.5,113 559.25,121.75 553,126.75"/>
<polyline points="540.5,195.5 550.5,194.25 563,194.25 573,191.75 581.75,190.5 586.75,185.5"/>
<polyline points="581.75,190.5 583,200.5 568,210.5 563,214.25"/>
<polyline points="539.25,214.25 541.75,225.5 539.25,237.75"/>
<polyline points="536.75,214.25 539.25,214.25 541.75,208 540.5,203"/>
<polyline points="569.25,161.75 578,164.25 583,169.25 579.25,174.25 586.75,178 588,185.5 596,188"/>
<polyline points="568,154.25 578,156.75 588,161.75 596,164.25"/>
<polyline points="583,169.25 590.5,168 596,171.75"/>
<polyline points="563,214.25 573,223 583,230.5 596,233"/>
<polyline points="541.75,225.5 550.5,228 555.5,223 553,219.25 563,214.25"/>
<polyline points="540.15,366.66 548.29,369.92 561.32,369.92 567.84,368.29 580.87,361.78 589.01,353.64 597.15,348.1"/>
<polyline points="566.21,368.29 566.21,382.95"/>
<polyline points="570.44,333.11 577.61,338.98 587.38,342.89 597.15,348.75"/>
<polyline points="406.88,195.62 406.25,200 406.88,205 403.75,210 403.12,215 405.62,218.75 408.75,223.12 410.62,228.75 411.88,234.38"/>
<polyline points="422.5,217.5 421.88,221.88 418.12,225 415.62,226.88 416.25,231.25 412.5,234.38 411.88,234.38"/>
<polyline points="411.88,234.38 413.75,238.75 414.38,245 413.12,250 414.38,253.75 412.5,256.25 413.12,259.88"/>
<polyline points="487.62,225 487,230 487.62,235 487,239.88"/>
<polyline points="594.19,107.32 596.63,102.43 603.15,97.54 609.66,94.29 619.43,93.47 625.95,95.92 629.21,100.8 635.72,99.17 643.86,99.99 652.01,99.17"/>
<polyline points="560.8,152.92 567.32,154.55 573.83,156.18 578.72,159.43 585.23,158.62 591.75,161.06 596.96,162.69"/>
<polyline points="568.94,165.95 575.46,166.76 578.72,169.21 579.53,174.09 581.97,177.35 586.86,175.72 590.12,178.98 593.37,175.72 596.96,177.35"/>
<polyline points="581.97,177.35 585.23,182.07"/>
<polyline points="720.27,158.19 725.75,154.9 732.33,156 740,153.81"/>
<polyline points="721.37,172.44 727.95,174.63 734.52,170.25 740,172.44"/>
<polyline points="722.47,181.21 730.14,185.59 729.04,194.36 723.56,195.45 732.33,198.74 737.81,205.32 734.52,209.7 740,211.89"/>
<polyline points="724.66,206 725.75,212.58 730.14,219.15 731.23,224.63 727.95,227.92 724.66,235.59 721.37,241.07"/>
<polyline points="285.5,321.5 291,321.5 297,322.5 299,322"/>
<polyline points="285.5,322.5 291,322.5 297,323.5"/>
<polyline points="285.5,323.5 290,324 294,323.5"/>
<polyline points="286,326.5 291,327.5 296,328 298,330"/>
<polyline points="481.88,79.25 482.5,85.5 478.75,89.25 481.25,93 480.62,95.5 483.12,101.75 482.5,104.25 478.75,107.38 476.25,111.75 475.62,114.25"/>
<polyline points="481.25,94.25 483.75,92.38 493.75,92.38 500,94.88 507.5,94.88 511.88,96.75 515,97.38"/>
<polyline points="438.75,99.5 445,101.75 448.75,104.88 453.75,106.12 457.5,110.5 461.25,111.12 465,111.75 471.25,111.12 475.62,112.38"/>
<polyline points="440,114.88 446.25,115.5 452.5,115.5 455,112.38 457.5,110.75"/>
<polyline points="475.62,114.25 474.38,118 477.5,121.12 483.75,122.38 488.75,123.62 493.75,121.12 497.5,119.25 501.25,118.62 505,120.5 508.12,121.75 508.75,126.12 511.25,131.75 511.88,135.5"/>
<polyline points="497.5,119.88 498.75,124.25 501.88,129.25 502.5,134.25 503.75,139.25 507.5,140.5 509.38,138"/>
<polyline points="448.75,116.75 449.38,121.12 455,123.62 460.62,121.12 466.88,118.62 473.75,118.62 474.38,118"/>
<polyline points="448.75,116.75 447.5,123.62 445.62,128 445,131.12"/>
<polyline points="445.62,131.75 450,134.88 455,137.38 460,136.12 465.62,135.5 469.38,131.75 471.88,127.38 474.38,123.62 477.5,121.75"/>
<polyline points="465.62,135.5 468.12,139.88 470,141.75 473.75,145.5 476.88,149.25 476.25,153 477.5,157.88"/>
<polyline points="473.75,145.5 477.5,149.88 483.75,151.12 487.5,151.75 493.75,149.88 500,149.25 505,149.88 506.25,146.12"/>
<polyline points="440,131.75 445,131.12 442.5,134.88 440,140.5"/>
<polyline points="442.5,134.88 447.5,136.75 451.25,138 456.25,137.38 460,140.5 461.25,143 459.38,148 460,153 458.75,157.88"/>
<polyline points="440,142.38 445,141.75 452.5,142.38 458.75,142.38 461.25,143"/>
<polyline points="442.5,143 445,148 448.75,153 452.5,157.88"/>
<polyline points="461.25,160 465.62,161.25 466.88,165 466.25,171.25 463.75,176.25"/>
<polyline points="466.88,163.75 471.25,161.88 475.62,161.25 478.12,166.25 471.25,169.38 466.88,170"/>
<polyline points="493.75,165 495,168.75 493.12,171.88"/>
<polyline points="458.75,143.75 460.62,148.75 460,153.75 457.5,155 456.88,160"/>
<polyline points="332.5,238.12 335,236.88 340,235 345,231.88 348.12,228.75 352.5,224.38 357.5,223.12 361.25,221.5 359,219.88"/>
<polyline points="536.88,360.62 539.38,364.38 540.62,366.25"/>
</g></g>
<g stroke="#c0c0c0" stroke-width="1">
<line x1="148.5" y1="79" x2="148.5" y2="594"/>
<line x1="220.5" y1="79" x2="220.5" y2="594"/>
<line x1="293.5" y1="79" x2="293.5" y2="594"/>
<line x1="366.5" y1="79" x2="366.5" y2="594"/>
<line x1="439.5" y1="79" x2="439.5" y2="594"/>
<line x1="512.5" y1="79" x2="512.5" y2="594"/>
<line x1="584.5" y1="79" x2="584.5" y2="594"/>
<line x1="657.5" y1="79" x2="657.5" y2="594"/>
<line x1="730.5" y1="79" x2="730.5" y2="594"/>
<line x1="114" y1="143.5" x2="740" y2="143.5"/>
<line x1="114" y1="235.5" x2="740" y2="235.5"/>
<line x1="114" y1="314.5" x2="740" y2="314.5"/>
<line x1="114" y1="388.5" x2="740" y2="388.5"/>
<line x1="114" y1="462.5" x2="740" y2="462.5"/>
<line x1="114" y1="541.5" x2="740" y2="541.5"/>
</g>
<g fill="none" shape-rendering="crispEdges" stroke="#0000ff" stroke-width="1">
<polyline points="114,139.5 130,135 148.5,130 167,126.2 185.7,123.3 205,121.6 221,121 240,121 261.4,122.5 280,124.6 293.8,126.8 310,129 330,134 351,141 358,143"/>
<polyline points="333,118 358,143"/>
<polyline points="332.5,116.5 358.5,98.5"/>
<polyline points="114,360 118,369 123,376 127,383 135,390"/>
<polyline points="135,390 141.5,392.5 149,394.5 164,399 179,404 194,406.5 201,409"/>
<polyline points="201,409 200.5,430 197,451"/>
<polyline points="197,451 187.5,478 161.75,538 132.5,594"/>
<polyline points="456,563 463,567.5 514.5,594"/>
</g>
<defs><linearGradient id="rg" gradientUnits="userSpaceOnUse" x1="236" y1="300" x2="456" y2="563"><stop offset="0" stop-color="#e8002a"/><stop offset="0.14" stop-color="#e00030"/><stop offset="0.2" stop-color="#a00070"/><stop offset="0.29" stop-color="#4800b8"/><stop offset="0.38" stop-color="#700098"/><stop offset="1" stop-color="#780090"/></linearGradient></defs>
<g fill="none" stroke-width="2" shape-rendering="crispEdges">
<polyline points="358.5,100 333,118.5 300,150" stroke="#e00030"/>
<polyline points="300,150 290,170 275,205 261,238 248,270 236,300" stroke="#e00030"/>
<polyline points="236,300 260,331 298,379 330,418 363,459 398,505 420,530.5 447,557.5 456,563" stroke="url(#rg)"/>
</g>
<rect x="352.5" y="96.5" width="12" height="13" fill="#fff" stroke="#000" shape-rendering="crispEdges"/>
<rect x="352.5" y="93.5" width="13" height="13" fill="#00e400" stroke="#000" shape-rendering="crispEdges"/><text x="359.0" y="103.7" text-anchor="middle" font-family="Liberation Sans, sans-serif" font-size="10px" fill="#000" shape-rendering="auto">1</text>
<rect x="326.5" y="111.5" width="13" height="13" fill="#fff" stroke="#000" shape-rendering="crispEdges"/><text x="333.0" y="121.7" text-anchor="middle" font-family="Liberation Sans, sans-serif" font-size="10px" fill="#000" shape-rendering="auto">2</text>
<rect x="351.5" y="136.5" width="13" height="13" fill="#fff" stroke="#000" shape-rendering="crispEdges"/><text x="358.0" y="146.7" text-anchor="middle" font-family="Liberation Sans, sans-serif" font-size="10px" fill="#000" shape-rendering="auto">1</text>
<rect x="293.5" y="143.5" width="13" height="13" fill="#00e400" stroke="#000" shape-rendering="crispEdges"/><text x="300.0" y="153.7" text-anchor="middle" font-family="Liberation Sans, sans-serif" font-size="10px" fill="#000" shape-rendering="auto">2</text>
<rect x="229.5" y="293.5" width="13" height="13" fill="#00e400" stroke="#000" shape-rendering="crispEdges"/><text x="236.0" y="303.7" text-anchor="middle" font-family="Liberation Sans, sans-serif" font-size="10px" fill="#000" shape-rendering="auto">3</text>
<rect x="446.5" y="557.5" width="13" height="13" fill="#00e400" stroke="#000" shape-rendering="crispEdges"/><text x="453.0" y="567.7" text-anchor="middle" font-family="Liberation Sans, sans-serif" font-size="10px" fill="#000" shape-rendering="auto"></text>
<rect x="450.5" y="556.5" width="13" height="13" fill="#00e400" stroke="#000" shape-rendering="crispEdges"/><text x="457.0" y="566.7" text-anchor="middle" font-family="Liberation Sans, sans-serif" font-size="10px" fill="#000" shape-rendering="auto">5</text>
<rect x="190.5" y="444.5" width="13" height="13" fill="#fff" stroke="#000" shape-rendering="crispEdges"/><text x="197.0" y="454.7" text-anchor="middle" font-family="Liberation Sans, sans-serif" font-size="10px" fill="#000" shape-rendering="auto">6</text>
<rect x="194.5" y="402.5" width="13" height="13" fill="#fff" stroke="#000" shape-rendering="crispEdges"/><text x="201.0" y="412.7" text-anchor="middle" font-family="Liberation Sans, sans-serif" font-size="10px" fill="#000" shape-rendering="auto">7</text>
<rect x="128.5" y="383.5" width="13" height="13" fill="#fff" stroke="#000" shape-rendering="crispEdges"/><text x="135.0" y="393.7" text-anchor="middle" font-family="Liberation Sans, sans-serif" font-size="10px" fill="#000" shape-rendering="auto">8</text>
<rect x="119.5" y="390.5" width="13" height="13" fill="#fff" stroke="#000" shape-rendering="crispEdges"/><text x="126.0" y="400.7" text-anchor="middle" font-family="Liberation Sans, sans-serif" font-size="10px" fill="#000" shape-rendering="auto">9</text>
<path d="M593.5 556v8.5h96v-5" fill="none" stroke="#e80000" shape-rendering="crispEdges"/><text x="590.5" y="554.5" font-family="Liberation Sans, sans-serif" font-size="11.5px" fill="#f01010">0</text>
<g fill="#c0c0c0" font-family="Liberation Sans, sans-serif" font-size="12.5px" shape-rendering="auto">
<text transform="translate(150.5,95) scale(.8,1)">45 W</text>
<text transform="translate(222.5,95) scale(.8,1)">30 W</text>
<text transform="translate(295.5,95) scale(.8,1)">15 W</text>
<text transform="translate(368.5,95) scale(.8,1)">0 E</text>
<text transform="translate(441.5,95) scale(.8,1)">15 E</text>
<text transform="translate(514.5,95) scale(.8,1)">30 E</text>
<text transform="translate(586.5,95) scale(.8,1)">45 E</text>
<text transform="translate(659.5,95) scale(.8,1)">60 E</text>
<text transform="translate(732.5,95) scale(.8,1)">75 E</text>
<text transform="translate(119.5,159) scale(.8,1)">45 N</text>
<text transform="translate(119.5,251) scale(.8,1)">30 N</text>
<text transform="translate(119.5,330) scale(.8,1)">15 N</text>
<text transform="translate(119.5,404) scale(.8,1)">0 N</text>
<text transform="translate(119.5,478) scale(.8,1)">15 S</text>
<text transform="translate(119.5,557) scale(.8,1)">30 S</text>
</g>
</svg>
<div id="rep" class="abs"><div class="abs h"><div class="abs" style="left:8px;top:9px;font-size:12px;white-space:nowrap;letter-spacing:-.1px">Instant Report</div><div class="abs" style="left:103px;top:8px;width:19px;height:19px;background:#c9474f"></div><div class="abs" style="left:103px;top:9px;width:19px;text-align:center;font-size:11px;font-weight:bold;color:#fff">x</div></div>
<div class="l" style="top:35px">Great Circle Distance:</div><div class="v" style="top:47.5px">6404.3 NM</div>
<div class="abs" style="left:0;top:65px;width:121px;height:1px;background:#a0a0a0"></div>
<div class="l" style="top:69px">Distance Traveled:</div><div class="v" style="top:81.5px">6943.4 NM</div>
<div class="abs" style="left:0;top:99px;width:121px;height:1px;background:#a0a0a0"></div>
<div class="l" style="top:103px">Rhumbline Distance:</div><div class="v" style="top:115.5px">6409.8 NM</div>
<div class="abs" style="left:0;top:133px;width:121px;height:1px;background:#a0a0a0"></div>
<div class="l" style="top:137px">Elapsed Time:</div><div class="v" style="top:149.5px">38.6 Days</div>
<div class="abs" style="left:0;top:167px;width:121px;height:1px;background:#a0a0a0"></div>
<div class="l" style="top:171px">Fuel Consumption:</div><div class="v" style="top:183.5px">0.0 Units</div>
<div class="abs" style="left:0;top:201px;width:121px;height:1px;background:#a0a0a0"></div>
<div class="l" style="top:205px">Average Boat Speed:</div><div class="v" style="top:217.5px">7.5 Kts</div>
<div class="abs" style="left:0;top:235px;width:121px;height:1px;background:#a0a0a0"></div>
<div class="l" style="top:239px">Boat Speed Made Good:</div><div class="v" style="top:251.5px">6.9 Kts</div>
<div class="abs" style="left:0;top:287.5px;width:121px;height:1px;background:#a0a0a0"></div>
<div class="l" style="top:290.9px">Average Wind Direction:</div><div class="v" style="top:303.4px">123 Deg</div>
<div class="abs" style="left:0;top:321.7px;width:121px;height:1px;background:#a0a0a0"></div>
<div class="l" style="top:325.09999999999997px">Average Wind Speed:</div><div class="v" style="top:337.59999999999997px">12.6 Kts</div>
<div class="abs" style="left:0;top:356px;width:121px;height:1px;background:#a0a0a0"></div>
<div class="l" style="top:359.4px">Average Current Set:</div><div class="v" style="top:371.9px">243 Deg</div>
<div class="abs" style="left:0;top:390px;width:121px;height:1px;background:#a0a0a0"></div>
<div class="l" style="top:393.4px">Average Current Drift:</div><div class="v" style="top:405.9px">0.6 Kts</div>
<div class="abs" style="left:0;top:424px;width:121px;height:1px;background:#a0a0a0"></div>
<div class="l" style="top:427.4px">Average Wave Height:</div><div class="v" style="top:439.9px">5.1 Ft</div>
<div class="abs" style="left:0;top:457.29999999999995px;width:121px;height:1px;background:#a0a0a0"></div>
<div class="v" style="right:auto;left:10px;top:264.5px">3.68</div><div class="v" style="right:5px;top:264.5px">10.68</div>
<div class="abs" style="left:36px;top:270px;width:50px;height:11px;box-sizing:border-box;border:1px solid #a0a0a0;background:linear-gradient(90deg,#0000ff,#7000a0 50%,#ff0000)"></div></div>
<div id="btb" class="abs"><div class="abs" style="left:0;top:0;width:626px;height:1px;background:#fff"></div>
<svg class="abs" style="left:0;top:0" width="626" height="27" viewBox="114 594 626 27" shape-rendering="crispEdges">
<rect x="118" y="599" width="1" height="1" fill="#a0a0a0"/><rect x="119" y="600" width="1" height="1" fill="#fff"/>
<rect x="118" y="602" width="1" height="1" fill="#a0a0a0"/><rect x="119" y="603" width="1" height="1" fill="#fff"/>
<rect x="118" y="605" width="1" height="1" fill="#a0a0a0"/><rect x="119" y="606" width="1" height="1" fill="#fff"/>
<rect x="118" y="608" width="1" height="1" fill="#a0a0a0"/><rect x="119" y="609" width="1" height="1" fill="#fff"/>
<rect x="118" y="611" width="1" height="1" fill="#a0a0a0"/><rect x="119" y="612" width="1" height="1" fill="#fff"/>
<rect x="118" y="614" width="1" height="1" fill="#a0a0a0"/><rect x="119" y="615" width="1" height="1" fill="#fff"/>
<rect x="118" y="617" width="1" height="1" fill="#a0a0a0"/><rect x="119" y="618" width="1" height="1" fill="#fff"/>
<rect x="378" y="599" width="1" height="1" fill="#a0a0a0"/><rect x="379" y="600" width="1" height="1" fill="#fff"/>
<rect x="378" y="602" width="1" height="1" fill="#a0a0a0"/><rect x="379" y="603" width="1" height="1" fill="#fff"/>
<rect x="378" y="605" width="1" height="1" fill="#a0a0a0"/><rect x="379" y="606" width="1" height="1" fill="#fff"/>
<rect x="378" y="608" width="1" height="1" fill="#a0a0a0"/><rect x="379" y="609" width="1" height="1" fill="#fff"/>
<rect x="378" y="611" width="1" height="1" fill="#a0a0a0"/><rect x="379" y="612" width="1" height="1" fill="#fff"/>
<rect x="378" y="614" width="1" height="1" fill="#a0a0a0"/><rect x="379" y="615" width="1" height="1" fill="#fff"/>
<rect x="378" y="617" width="1" height="1" fill="#a0a0a0"/><rect x="379" y="618" width="1" height="1" fill="#fff"/>
<rect x="197" y="598" width="1" height="19" fill="#a0a0a0"/>
<rect x="274" y="598" width="1" height="19" fill="#a0a0a0"/>
<rect x="149.5" y="597.5" width="22" height="20" fill="#cce4f7" stroke="#7ab4e6"/>
<g shape-rendering="auto"><circle cx="136.5" cy="607.5" r="6" fill="#00e0e0" stroke="#111" stroke-width="1.2"/><ellipse cx="136.5" cy="607.5" rx="2.8" ry="6" fill="none" stroke="#111"/><path d="M130.5 607.5h12M131.5 604.5h10M131.5 610.5h10M136.5 601.5v12" stroke="#111" fill="none"/></g>
<rect x="154.5" y="601.5" width="12" height="12" fill="#00e0e0" stroke="#111"/><path d="M158.5 601.5v12M162.5 601.5v12M154.5 605.5h12M154.5 609.5h12" stroke="#111"/>
<rect x="176.5" y="601.5" width="12" height="12" fill="#00e0e0" stroke="#111"/><path d="M180.5 601.5v12M184.5 601.5v12M176.5 605.5h12M176.5 609.5h12" stroke="#111"/>
<g shape-rendering="auto"><circle cx="212.5" cy="605.5" r="4.8" fill="#fff" stroke="#111" stroke-width="1.3"/><path d="M216 609.5l5.5 5.5" stroke="#111" stroke-width="2.2"/>
<path d="M210 605.5h5M212.5 603v5" stroke="#e00000" stroke-width="1.3"/>
</g>
<g shape-rendering="auto"><circle cx="235.5" cy="605.5" r="4.8" fill="#fff" stroke="#111" stroke-width="1.3"/><path d="M239 609.5l5.5 5.5" stroke="#111" stroke-width="2.2"/>
<path d="M233 605.5h5" stroke="#e00000" stroke-width="1.3"/>
</g>
<g shape-rendering="auto"><circle cx="258.5" cy="605.5" r="4.8" fill="#fff" stroke="#111" stroke-width="1.3"/><path d="M262 609.5l5.5 5.5" stroke="#111" stroke-width="2.2"/>
<path d="M254.5 605.5h8M258.5 601.5v8" stroke="#e00000" stroke-width="1.3"/><circle cx="258.5" cy="605.5" r="2" fill="none" stroke="#e00000"/>
</g>
<rect x="280.5" y="597.5" width="86" height="20" fill="#e4e4e4" stroke="#adadad"/>
<path d="M351 605.5l4.5 4.5 4.5-4.5" fill="none" stroke="#444" stroke-width="1.2" shape-rendering="auto"/>
<rect x="387.5" y="597.5" width="73" height="20" fill="#f6f6f6" stroke="#8a8a8a"/><rect x="388.5" y="598.5" width="71" height="18" fill="none" stroke="#fff"/>
<rect x="464" y="597" width="1" height="21" fill="#a0a0a0"/><rect x="465" y="597" width="1" height="21" fill="#fff"/>
<rect x="547" y="597" width="1" height="21" fill="#a0a0a0"/><rect x="548" y="597" width="1" height="21" fill="#fff"/>
<rect x="630" y="597" width="1" height="21" fill="#a0a0a0"/><rect x="631" y="597" width="1" height="21" fill="#fff"/>
<rect x="702" y="596" width="35" height="23" fill="#f0f0f0"/>
<rect x="703.5" y="602.5" width="15" height="15" fill="#ececec" stroke="#b0b0b0"/><rect x="719.5" y="602.5" width="15" height="15" fill="#ececec" stroke="#b0b0b0"/>
<path d="M713 606.5v7l-3.5-3.5zM725.5 606.5v7l3.5-3.5z" fill="#111" shape-rendering="auto"/>
</svg>
<div class="lbl" style="left:170px;top:7px;font-size:11px">May</div>
<div class="lbl" style="left:280px;top:7px;">WBRDLEG1</div>
<div class="lbl" style="left:362.5px;top:7px;">WBRDLEG2</div>
<div class="lbl" style="left:445px;top:7px;">WBRDLEG3</div>
<div class="lbl" style="left:528px;top:7px;width:61px;overflow:hidden">WBRDLEG4</div></div>
<div id="status" class="abs"><div class="abs" style="left:0;top:0;width:740px;height:1px;background:#fff"></div>
<div class="abs" style="left:1px;top:2px;width:168px;height:16px;box-sizing:border-box;border-top:1px solid #b4b4b4;border-left:1px solid #b4b4b4;border-right:1px solid #fff"></div>
<div class="abs" style="left:171px;top:2px;width:299px;height:16px;box-sizing:border-box;border-top:1px solid #b4b4b4;border-left:1px solid #b4b4b4;border-right:1px solid #fff"></div>
<div class="abs" style="left:472px;top:2px;width:266px;height:16px;box-sizing:border-box;border-top:1px solid #b4b4b4;border-left:1px solid #b4b4b4;border-right:1px solid #fff"></div>
<div class="lbl" style="left:4px;top:3px;font-size:13px;letter-spacing:-.3px">28° 58.54' N&nbsp; 32° 59.15' W</div>
<div class="lbl" style="left:175px;top:3px;font-size:13px;letter-spacing:0">Magnetic Variation: -11.26° for 12/27/2016</div>
<svg class="abs" style="left:726px;top:5px" width="13" height="13"><path d="M11 3h1v1h-1zM8 6h1v1h-1zM11 6h1v1h-1zM5 9h1v1h-1zM8 9h1v1h-1zM11 9h1v1h-1z" fill="#a0a0a0"/></svg></div>
</body></html>
